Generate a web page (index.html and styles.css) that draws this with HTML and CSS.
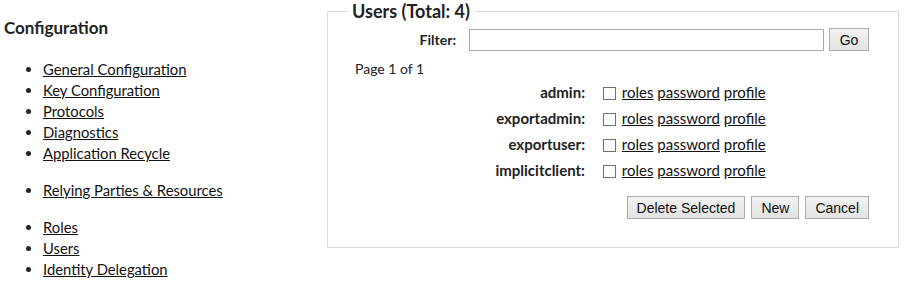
FILE: index.html
```html
<!DOCTYPE html>
<html lang="en">
<head>
<meta charset="UTF-8">
<title>Users</title>
<link rel="stylesheet" href="styles.css">
</head>
<body>
<div class="page">
    <div class="sidebar">
        <h2>Configuration</h2>
        <ul>
            <li><a href="#">General Configuration</a></li>
            <li><a href="#">Key Configuration</a></li>
            <li><a href="#">Protocols</a></li>
            <li><a href="#">Diagnostics</a></li>
            <li><a href="#">Application Recycle</a></li>
        </ul>
        <ul>
            <li><a href="#">Relying Parties &amp; Resources</a></li>
        </ul>
        <ul>
            <li><a href="#">Roles</a></li>
            <li><a href="#">Users</a></li>
            <li><a href="#">Identity Delegation</a></li>
        </ul>
    </div>
    <fieldset class="users">
        <legend>Users (Total: 4)</legend>
        <div class="filter">
            <label for="filter">Filter:</label>
            <input type="text" id="filter">
            <button>Go</button>
        </div>
        <div class="paging">Page 1 of 1</div>
        <div class="userlist">
            <div class="name">admin:</div>
            <div class="actions"><input type="checkbox"> <a href="#">roles</a> <a href="#">password</a> <a href="#">profile</a></div>
            <div class="name">exportadmin:</div>
            <div class="actions"><input type="checkbox"> <a href="#">roles</a> <a href="#">password</a> <a href="#">profile</a></div>
            <div class="name">exportuser:</div>
            <div class="actions"><input type="checkbox"> <a href="#">roles</a> <a href="#">password</a> <a href="#">profile</a></div>
            <div class="name">implicitclient:</div>
            <div class="actions"><input type="checkbox"> <a href="#">roles</a> <a href="#">password</a> <a href="#">profile</a></div>
        </div>
        <div class="buttons">
            <button>Delete Selected</button>
            <button>New</button>
            <button>Cancel</button>
        </div>
    </fieldset>
</div>
</body>
</html>
```

FILE: styles.css
```css
body {
    margin: 0;
    font-family: 'Lato', 'Open Sans', sans-serif;
    font-size: 14px;
    color: #222;
    background: #fff;
}
a {
    color: #111;
    text-decoration: underline;
}
.page {
    display: flex;
    align-items: flex-start;
}
.sidebar {
    width: 323px;
    padding-left: 4px;
    box-sizing: border-box;
}
.sidebar h2 {
    font-size: 17px;
    margin: 18px 0 21px 0;
    line-height: 20px;
}
.sidebar ul {
    margin: 0 0 16px 0;
    padding-left: 39px;
}
.sidebar li {
    line-height: 21px;
    font-size: 14.8px;
}
.users {
    width: 572px;
    box-sizing: border-box;
    margin: 0 0 0 4px;
    padding: 0 29px 28px 27px;
    border: 1px solid #ddd;
}
.users legend {
    font-weight: bold;
    font-size: 18px;
    padding: 0 4px;
    margin-left: -7px;
}
.filter {
    display: flex;
    justify-content: flex-end;
    align-items: center;
    margin-top: 6px;
}
.filter label {
    font-weight: bold;
    margin-right: 13px;
}
.filter input {
    width: 355px;
    height: 22px;
    box-sizing: border-box;
    border: 1px solid #aaa;
    margin: 0 5px 0 0;
}
button {
    font-family: 'Liberation Sans', Arial, sans-serif;
    font-size: 14px;
    color: #111;
    background: linear-gradient(#f2f2f2, #e2e2e2);
    border: 1px solid #adadad;
    height: 23px;
    padding: 0 9px;
}
.filter button {
    width: 40px;
    padding: 0;
}
.paging {
    margin: 8px 0 0 0;
    line-height: 20px;
}
.userlist {
    display: grid;
    grid-template-columns: 230px auto;
    column-gap: 18px;
    grid-auto-rows: 26px;
    align-items: center;
    margin-top: 0;
    font-size: 15px;
}
.userlist .name {
    text-align: right;
    font-weight: bold;
}
.actions input {
    appearance: none;
    width: 13px;
    height: 13px;
    margin: 0 2px 0 0;
    border: 1px solid #707070;
    background: #fff;
    vertical-align: -2px;
}
.buttons {
    display: flex;
    justify-content: flex-end;
    gap: 6px;
    margin-top: 13px;
}
```
